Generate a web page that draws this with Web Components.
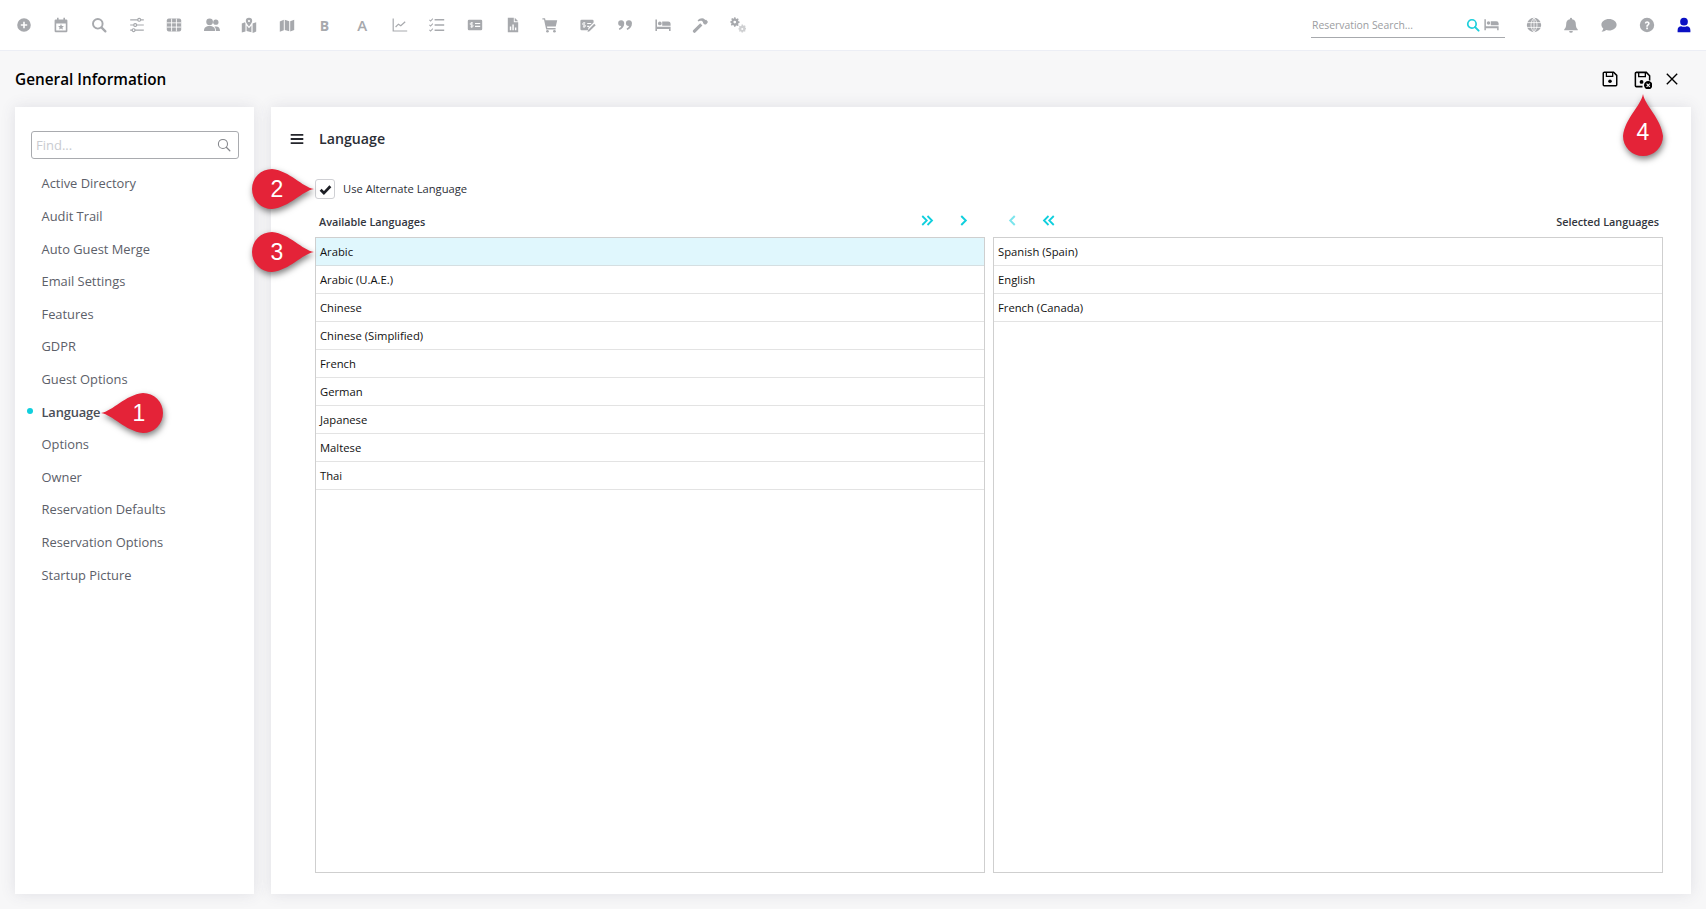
<!DOCTYPE html>
<html lang="en">
<head>
<meta charset="utf-8">
<title>General Information</title>
<style>
  html, body { margin: 0; height: 100%; }
  body {
    display: flex; flex-direction: column; height: 909px; overflow: hidden; position: relative;
    background: #f7f7f8; font-family: "Open Sans", "Liberation Sans", sans-serif; color: #222;
  }
</style>
</head>
<body>
<top-bar></top-bar>
<page-head>General Information</page-head>
<page-body>
  <side-nav>
    <nav-item>Active Directory</nav-item>
    <nav-item>Audit Trail</nav-item>
    <nav-item>Auto Guest Merge</nav-item>
    <nav-item>Email Settings</nav-item>
    <nav-item>Features</nav-item>
    <nav-item>GDPR</nav-item>
    <nav-item>Guest Options</nav-item>
    <nav-item active>Language</nav-item>
    <nav-item>Options</nav-item>
    <nav-item>Owner</nav-item>
    <nav-item>Reservation Defaults</nav-item>
    <nav-item>Reservation Options</nav-item>
    <nav-item>Startup Picture</nav-item>
  </side-nav>
  <lang-panel></lang-panel>
</page-body>
<call-out n="1" dir="left" x="101" y="393"></call-out>
<call-out n="2" dir="right" x="252" y="169"></call-out>
<call-out n="3" dir="right" x="252" y="232"></call-out>
<call-out n="4" dir="up" x="1623" y="94"></call-out>

<script>
// icon art, 20x20 box
const ICONS = {
  plus: '<path fill-rule="evenodd" d="M10 1.5a8.5 8.5 0 1 1 0 17 8.5 8.5 0 0 1 0-17zM9 6v3H6v2h3v3h2v-3h3V9h-3V6z"/>',
  calendar: '<path fill-rule="evenodd" d="M5 1h2v2h6V1h2v2h1.5A1.5 1.5 0 0 1 18 4.500v13a1.500 1.500 0 0 1-1.500 1.500h-13A1.500 1.500 0 0 1 2 17.500v-13A1.500 1.500 0 0 1 3.500 3H5zM4 8v9h12V8z"/><path d="M10 8.800l1.100 2.300 2.500.3-1.800 1.700.5 2.500-2.300-1.200-2.300 1.200.5-2.500-1.800-1.700 2.500-.3z"/>',
  search: '<circle cx="8.500" cy="8.500" r="6" fill="none" stroke="currentColor" stroke-width="2.400"/><path d="M13 13l5 5" stroke="currentColor" stroke-width="2.800" stroke-linecap="round"/>',
  sliders: '<path d="M1.500 3.500h17M1.500 10h17M1.500 16.500h17" stroke="currentColor" stroke-width="1.500"/><g fill="#fff" stroke="currentColor" stroke-width="1.500"><rect x="11" y="1.800" width="3.500" height="3.500" rx="1.500"/><rect x="6" y="8.200" width="3.500" height="3.500" rx="1.500"/><rect x="4" y="14.700" width="3.500" height="3.500" rx="1.500"/></g>',
  grid: '<rect x="1" y="2" width="18" height="16" rx="2.500"/><path d="M1 7.300h18M1 12.600h18M7 2v16M13 2v16" stroke="#fff" stroke-width="1.100"/>',
  users: '<circle cx="7" cy="6" r="4.200"/><circle cx="14.800" cy="6.500" r="3.300"/><path d="M0 17.500c0-4.500 2.500-6.300 7-6.300s7 1.800 7 6.300zM15 17.500h5c0-4-1.800-5.700-5-5.700-.9 0-1.500.1-2 .3 1.400 1.300 2 3 2 5.400z"/>',
  mapmark: '<path d="M10 1a4 4 0 0 1 4 4c0 2-2.500 5-4 6.800C8.500 10 6 7 6 5a4 4 0 0 1 4-4z"/><path d="M1 8l4-1.500.6 1.500v10L1 19.500zM7 10.500l3 3.500 3-3.500v8.500l-6-1.500zM14.500 8L19 6.500v11.700L14.500 20z"/><circle cx="10" cy="5" r="1.400" fill="#fff"/>',
  map: '<path d="M1 5.500L6 3.500v13L1 18.500zM7.200 3.500l5.600 1.800v12.500l-5.600-1.500zM14 5.300L19 3.500v12.700L14 18z"/>',
  chart: '<path d="M1.500 2v15.500H19" fill="none" stroke="currentColor" stroke-width="1.500"/><path d="M4.500 12.500l3.500-3.500 3 2 5.500-5" fill="none" stroke="currentColor" stroke-width="1.500"/>',
  tasks: '<path d="M.5 3.500l1.500 1.500L4.800 2M.5 9.800l1.500 1.500 2.800-3M.5 16l1.500 1.500 2.800-3" fill="none" stroke="currentColor" stroke-width="1.300"/><path d="M7 2.500h12v2H7zM7 9h12v2H7zM7 15.500h12v2H7z"/>',
  check: '<path fill-rule="evenodd" d="M2.500 3.500h15A1.500 1.500 0 0 1 19 5v10a1.500 1.500 0 0 1-1.500 1.500h-15A1.500 1.500 0 0 1 1 15V5a1.500 1.500 0 0 1 1.500-1.500zM10 7.500v1.400h6.500V7.500zM10 11v1.400h6.500V11z"/><path d="M7.500 7.400H5.200a.9.9 0 0 0 0 2.600h1.500a.8.800 0 0 1 0 2.200H4.300M5.900 6.300v7.400" fill="none" stroke="#fff" stroke-width="1"/>',
  file: '<path fill-rule="evenodd" d="M3.500 1H11v5.500h5.500V19h-13zM6 12v4.500h1.800V12zM9.200 9.500v7H11v-7zM12.400 13v3.500h1.800V13z"/><path d="M12.200 1l4.300 4.300h-4.300z"/>',
  cart: '<path d="M.5 1.500h3.300l.6 2.500H19l-1.800 8H6.200l.4 1.800H17v1.700H5.200L2.500 3.200H.5z"/><circle cx="6.800" cy="17.800" r="1.700"/><circle cx="15.500" cy="17.800" r="1.700"/>',
  checkedit: '<path fill-rule="evenodd" d="M2 3.500h13.500A1.500 1.500 0 0 1 17 5v2l-6.500 6.500-.6 3H2A1.500 1.500 0 0 1 .5 15V5A1.500 1.500 0 0 1 2 3.500zM9 7.500v1.400h5V7.500zM9 11v1.400h2.500V11z"/><path d="M6.700 7.400H4.500a.9.9 0 0 0 0 2.600h1.400a.8.800 0 0 1 0 2.200H3.600M5.100 6.300v7.400" fill="none" stroke="#fff" stroke-width="1"/><path d="M17.800 8.400l1.800 1.800-7.700 7.700-2.500.7.700-2.500z"/>',
  quote: '<path d="M5.300 4a4 4 0 0 1 3.700 4.200c0 4-2.400 7-6 8l-.7-1.700c1.600-.7 2.600-1.800 3-3.100H5a3.700 3.700 0 1 1 .3-7.400zM15 4a4 4 0 0 1 3.700 4.200c0 4-2.400 7-6 8l-.7-1.700c1.600-.7 2.600-1.800 3-3.100h-.3A3.700 3.700 0 1 1 15 4z"/>',
  bed: '<path fill-rule="evenodd" d="M.5 3h2v9.200h17V17.500h-2V15H2.500v2.500h-2z"/><circle cx="6" cy="8" r="2.300"/><path d="M9 5.500h7.500a3 3 0 0 1 3 3v2.500H9z"/>',
  hammer: '<path d="M10.300 7.800l2.700 2.700-8.500 8.700a1.900 1.900 0 0 1-2.800-2.800z"/><path d="M7 4.500C9.500 1.500 13.500.5 16 3l.7.7 1-.2 2 2-.2 1.800-2 2-1.800.2-2-2 .2-1-1.400-1.500c-1.400-.8-3.300-.2-4.500.5z"/>',
  cogs: '<path fill-rule="evenodd" d="M6 1h2l.4 1.800 1.400.6 1.600-1 1.400 1.400-1 1.600.6 1.400 1.700.4v2l-1.700.4-.6 1.400 1 1.600-1.400 1.400-1.600-1-1.400.6L8 15H6l-.4-1.900-1.400-.6-1.600 1-1.400-1.400 1-1.600-.6-1.400L.5 9V7l1.700-.4.600-1.400-1-1.600 1.400-1.400 1.600 1 1.400-.6zM7 6a2 2 0 1 0 0 4 2 2 0 0 0 0-4z" transform="matrix(.85 0 0 .85 0 -.5)"/><path opacity=".55" fill-rule="evenodd" d="M13.500 10h2l.3 1.300 1.200.5 1.200-.7 1.200 1.200-.7 1.200.4 1.200 1.300.3v1.800l-1.300.3-.4 1.100.7 1.200-1.200 1.200-1.200-.7-1.200.5-.3 1.300h-2l-.3-1.300-1.100-.5-1.200.7-1.300-1.200.8-1.200-.5-1.100-1.300-.3V15.700l1.300-.3.5-1.200-.8-1.200 1.300-1.200 1.200.7 1.100-.5zM14.500 15a1.500 1.500 0 1 0 0 3 1.500 1.500 0 0 0 0-3z" transform="matrix(.85 0 0 .85 3 1)"/>',
  globe: '<circle cx="10" cy="10" r="9"/><path d="M1 7h18M1 13h18M10 1v18M10 1c-5 5-5 13 0 18M10 1c5 5 5 13 0 18" fill="none" stroke="#fff" stroke-width="1"/>',
  bell: '<path d="M10 1a1.300 1.300 0 0 1 1.300 1.300v.5A6 6 0 0 1 16 8.700c0 4.800 2 5.800 2.500 7v.8h-17v-.8c.5-1.200 2.500-2.200 2.500-7a6 6 0 0 1 4.700-5.900v-.5A1.300 1.300 0 0 1 10 1zM7.700 17.500h4.600a2.300 2.300 0 0 1-4.600 0z"/>',
  chat: '<path d="M10 2.500c5.300 0 9.500 3.200 9.500 7.200s-4.200 7.200-9.500 7.200c-1.300 0-2.500-.2-3.600-.6C5 17.600 3 18.300.7 18.300c1.300-1.300 2-2.600 2.200-3.900C1.400 13.100.5 11.500.5 9.700c0-4 4.200-7.200 9.500-7.200z"/>',
  help: '<path fill-rule="evenodd" d="M10 1a9 9 0 1 1 0 18 9 9 0 0 1 0-18zM9 13v2.200h2.200V13zM7.200 7.800l1.700.6c.2-.7.600-1.100 1.200-1.100.7 0 1.100.4 1.100 1 0 .5-.3.800-.8 1.200-.9.700-1.300 1.200-1.300 2.700h2c0-.8.100-1.100.8-1.600.8-.6 1.400-1.300 1.400-2.400 0-1.600-1.300-2.800-3.100-2.800-1.700 0-2.700 1-3 2.400z"/>',
  user: '<circle cx="10" cy="5.800" r="4.800"/><path d="M2 19v-2.500c0-3 2-5 4.500-5 1.100.5 2.200.8 3.500.8s2.400-.3 3.500-.8c2.500 0 4.500 2 4.500 5V19z"/>',
  save: '<path d="M3 2.500h11l3.500 3.500v10.500a1 1 0 0 1-1 1h-13a1 1 0 0 1-1-1v-13a1 1 0 0 1 1-1z" fill="none" stroke="currentColor" stroke-width="1.600"/><path d="M6 3v4h7V3" fill="none" stroke="currentColor" stroke-width="1.400"/><circle cx="10" cy="12.500" r="2"/>',
  savex: '<path d="M3 2.500h11l3.500 3.500v5M10 17.500H3.500a1 1 0 0 1-1-1v-13a1 1 0 0 1 1-1" fill="none" stroke="currentColor" stroke-width="1.600"/><path d="M6 3v4h7V3" fill="none" stroke="currentColor" stroke-width="1.400"/><circle cx="9" cy="12.500" r="2"/><circle cx="16" cy="16" r="4.400"/><path d="M14.300 14.300l3.400 3.400M17.700 14.300l-3.400 3.400" stroke="#fff" stroke-width="1.200"/>',
  close: '<path d="M3.500 3.500l13 13M16.500 3.500l-13 13" stroke="currentColor" stroke-width="1.700"/>',
  menu: '<path d="M1 4h18M1 10h18M1 16h18" stroke="currentColor" stroke-width="2.600"/>',
  find: '<circle cx="8.500" cy="8.500" r="6.500" fill="none" stroke="currentColor" stroke-width="1.500"/><path d="M13.300 13.300l5 5" stroke="currentColor" stroke-width="1.800" stroke-linecap="round"/>',
  tick: '<path d="M2.500 10.500l5 5L17.500 5" fill="none" stroke="currentColor" stroke-width="4.200"/>',
  right2: '<path d="M3 4l6 6-6 6M10 4l6 6-6 6" fill="none" stroke="currentColor" stroke-width="2.400"/>',
  left2: '<path d="M10 4l-6 6 6 6M17 4l-6 6 6 6" fill="none" stroke="currentColor" stroke-width="2.400"/>',
  right1: '<path d="M7 4l6 6-6 6" fill="none" stroke="currentColor" stroke-width="2.600"/>',
  left1: '<path d="M13 4l-6 6 6 6" fill="none" stroke="currentColor" stroke-width="2.600"/>'
};

class uiIcon extends HTMLElement {
  constructor() {
    super();
    this.attachShadow({ mode: 'open' });
  }
  connectedCallback() {
    const size = this.getAttribute('size') || 16;
    this.shadowRoot.innerHTML = `
      <style>
        :host { display: inline-flex; align-items: center; justify-content: center; flex: none; line-height: 0; }
        svg { fill: currentColor; display: block; }
      </style>
      <svg width="${size}" height="${size}" viewBox="0 0 20 20">${ICONS[this.getAttribute('name')] || ''}</svg>
    `;
  }
}
customElements.define('ui-icon', uiIcon);

class topBar extends HTMLElement {
  constructor() {
    super();
    this.attachShadow({ mode: 'open' });
  }
  connectedCallback() {
    const left = ['plus', 'calendar', 'search', 'sliders', 'grid', 'users', 'mapmark', 'map', 'B', 'A', 'chart', 'tasks',
      'check', 'file', 'cart', 'checkedit', 'quote', 'bed', 'hammer', 'cogs'];
    const right = ['globe', 'bell', 'chat', 'help'];
    const cell = n => n.length === 1
      ? `<span class="cell letter">${n}</span>`
      : `<span class="cell"><ui-icon name="${n}"></ui-icon></span>`;
    this.shadowRoot.innerHTML = `
      <style>
        :host { display: flex; flex: none; height: 50px; align-items: center; background: #fff; border-bottom: 1px solid #eceef5; padding: 0 3px 0 5px; color: #a7a9ad; }
        .cell { display: flex; width: 37.6px; justify-content: center; align-items: center; flex: none; }
        .letter { font: 700 14px "Open Sans", sans-serif; }
        .letter + .letter { font-weight: 600; font-size: 15px; }
        .group { display: flex; }
        .find { display: flex; align-items: center; box-sizing: border-box; width: 194px; height: 26px; margin: 0 10px 0 auto; border-bottom: 1px solid #a7a9ad; padding: 0 6px 0 1px; font-size: 10.4px; }
        .find span { flex: 1; color: #9b9da1; }
        .find ui-icon:first-of-type { color: #1ccfdb; margin-right: 4px; }
        .user { color: #0a10c4; }
      </style>
      <div class="group">${left.map(cell).join('')}</div>
      <div class="find"><span>Reservation Search...</span><ui-icon name="search" size="14"></ui-icon><ui-icon name="bed" size="15"></ui-icon></div>
      <div class="group">${right.map(cell).join('')}<span class="cell user"><ui-icon name="user"></ui-icon></span></div>
    `;
  }
}
customElements.define('top-bar', topBar);

class pageHead extends HTMLElement {
  constructor() {
    super();
    this.attachShadow({ mode: 'open' });
  }
  connectedCallback() {
    this.shadowRoot.innerHTML = `
      <style>
        :host { display: flex; flex: none; height: 56px; align-items: center; padding: 0 26px 0 15px; color: #000; }
        h1 { margin: 0 auto 0 0; font: 600 15.35px "Open Sans", sans-serif; }
        .save2 { margin: 0 12px 0 14.5px; }
      </style>
      <h1><slot></slot></h1>
      <ui-icon name="save" size="18"></ui-icon>
      <ui-icon class="save2" name="savex" size="19"></ui-icon>
      <ui-icon name="close" size="16"></ui-icon>
    `;
  }
}
customElements.define('page-head', pageHead);

class pageBody extends HTMLElement {
  constructor() {
    super();
    this.attachShadow({ mode: 'open' });
  }
  connectedCallback() {
    this.shadowRoot.innerHTML = `
      <style>
        :host { display: flex; flex: 1; min-height: 0; gap: 17px; padding: 0 15px 15px; }
      </style>
      <slot></slot>
    `;
  }
}
customElements.define('page-body', pageBody);

class sideNav extends HTMLElement {
  constructor() {
    super();
    this.attachShadow({ mode: 'open' });
  }
  connectedCallback() {
    this.shadowRoot.innerHTML = `
      <style>
        :host { display: block; flex: none; box-sizing: border-box; width: 239px; padding: 24px 15px 0 16px; background: #fff; box-shadow: 0 0 14px rgba(70,70,100,.13); }
        .find { display: flex; align-items: center; box-sizing: border-box; height: 28px; margin-bottom: 8px; padding: 0 7px 0 4px; border: 1px solid #a9abaf; border-radius: 3px; font-size: 13px; color: #c9cbd0; }
        .find span { flex: 1; }
        .find ui-icon { color: #85878c; }
      </style>
      <div class="find"><span>Find...</span><ui-icon name="find" size="14"></ui-icon></div>
      <slot></slot>
    `;
  }
}
customElements.define('side-nav', sideNav);

class navItem extends HTMLElement {
  constructor() {
    super();
    this.attachShadow({ mode: 'open' });
  }
  connectedCallback() {
    this.shadowRoot.innerHTML = `
      <style>
        :host { display: flex; align-items: center; height: 32.62px; padding-left: 10.5px; font-size: 12.88px; color: #5c6069; position: relative; }
        :host([active]) { font-weight: 600; color: #4a4e57; letter-spacing: -.15px; }
        :host([active])::before { content: ""; position: absolute; left: -4px; top: 12.5px; width: 6px; height: 6px; border-radius: 50%; background: #10cfdd; }
      </style>
      <slot></slot>
    `;
  }
}
customElements.define('nav-item', navItem);

class langList extends HTMLElement {
  constructor() {
    super();
    this.attachShadow({ mode: 'open' });
  }
  connectedCallback() {
    const items = (this.getAttribute('items') || '').split('|');
    this.shadowRoot.innerHTML = `
      <style>
        :host { display: block; box-sizing: border-box; min-height: 0; height: 100%; border: 1px solid #cfcfcf; font-size: 11.25px; color: #111; }
        div { box-sizing: border-box; display: flex; align-items: center; height: 28px; padding: 0 0 1px 4px; border-bottom: 1px solid #e3e3e3; }
        .sel { background: #e0f7fd; border-bottom-color: #d5dfe2; }
      </style>
      ${items.map((t, i) => `<div class="${i === 0 && this.hasAttribute('first-selected') ? 'sel' : ''}">${t}</div>`).join('')}
    `;
  }
}
customElements.define('lang-list', langList);

class langPanel extends HTMLElement {
  constructor() {
    super();
    this.attachShadow({ mode: 'open' });
  }
  connectedCallback() {
    this.shadowRoot.innerHTML = `
      <style>
        :host { display: flex; flex-direction: column; flex: 1; min-width: 0; box-sizing: border-box; background: #fff; padding: 0 28px 21px 44px; box-shadow: 0 0 14px rgba(70,70,100,.13); }
        .head { display: flex; align-items: center; gap: 15px; box-sizing: border-box; height: 64px; padding-bottom: 1px; margin-left: -25px; font-size: 14.2px; font-weight: 600; color: #2b2e36; }
        .head ui-icon { color: #24262c; }
        .use { display: flex; align-items: center; gap: 8px; height: 20px; margin-top: 8px; font-size: 11.2px; color: #2b2e36; }
        .use > span:last-child { margin-top: -1px; }
        .box { display: flex; align-items: center; justify-content: center; box-sizing: border-box; width: 20px; height: 20px; border: 1px solid #cfd0d4; border-radius: 3px; color: #1d1f25; }
        .cols { display: grid; grid-template-columns: 670px 670px; column-gap: 8px; }
        .tools { display: flex; align-items: center; height: 20px; margin: 13px 0 5px; font-size: 10.85px; font-weight: 600; color: #33363e; }
        .tools span { margin-top: -1px; }
        .tools ui-icon { color: #10cfdd; width: 20px; margin-top: -3px; }
        .l { padding: 0 12px 0 4px; gap: 16px; }
        .l span { margin-right: auto; }
        .r { padding: 0 4px 0 9px; gap: 16.5px; }
        .r span { margin-left: auto; }
        .dim { opacity: .55; }
        .lists { flex: 1; min-height: 0; }
      </style>
      <div class="head"><ui-icon name="menu" size="14"></ui-icon><span>Language</span></div>
      <div class="use"><span class="box"><ui-icon name="tick" size="13"></ui-icon></span><span>Use Alternate Language</span></div>
      <div class="cols">
        <div class="tools l"><span>Available Languages</span><ui-icon name="right2" size="15"></ui-icon><ui-icon name="right1" size="15"></ui-icon></div>
        <div class="tools r"><ui-icon class="dim" name="left1" size="15"></ui-icon><ui-icon name="left2" size="15"></ui-icon><span>Selected Languages</span></div>
      </div>
      <div class="cols lists">
        <lang-list first-selected items="Arabic|Arabic (U.A.E.)|Chinese|Chinese (Simplified)|French|German|Japanese|Maltese|Thai"></lang-list>
        <lang-list items="Spanish (Spain)|English|French (Canada)"></lang-list>
      </div>
    `;
  }
}
customElements.define('lang-panel', langPanel);

// red numbered teardrop laid over the page, x/y = top left of its box
class callOut extends HTMLElement {
  constructor() {
    super();
    this.attachShadow({ mode: 'open' });
  }
  connectedCallback() {
    const dir = this.getAttribute('dir');
    const up = dir === 'up';
    const w = up ? 40 : 62;
    const h = up ? 62 : 40;
    const turn = { left: '', right: 'rotate(180 31 20)', up: 'translate(40 0) rotate(90)' }[dir];
    const pos = { left: 'right:4px;width:40px;top:0;height:40px', right: 'left:5px;width:40px;top:0;height:40px', up: 'left:0;width:40px;bottom:4px;height:40px' }[dir];
    this.shadowRoot.innerHTML = `
      <style>
        :host { position: absolute; left: ${this.getAttribute('x')}px; top: ${this.getAttribute('y')}px; width: ${w}px; height: ${h}px; display: block; }
        svg { display: block; overflow: visible; filter: drop-shadow(1px 3px 3px rgba(0,0,0,.5)); }
        span { position: absolute; ${pos}; display: flex; align-items: center; justify-content: center; color: #fff; font: 23px "Liberation Sans", sans-serif; }
      </style>
      <svg width="${w}" height="${h}" viewBox="0 0 ${w} ${h}"><path transform="${turn}" fill="#e42338" d="M0 20C12 18 24 2 42 0a20 20 0 0 1 0 40C24 38 12 22 0 20z"/></svg>
      <span>${this.getAttribute('n')}</span>
    `;
  }
}
customElements.define('call-out', callOut);
</script>
</body>
</html>
